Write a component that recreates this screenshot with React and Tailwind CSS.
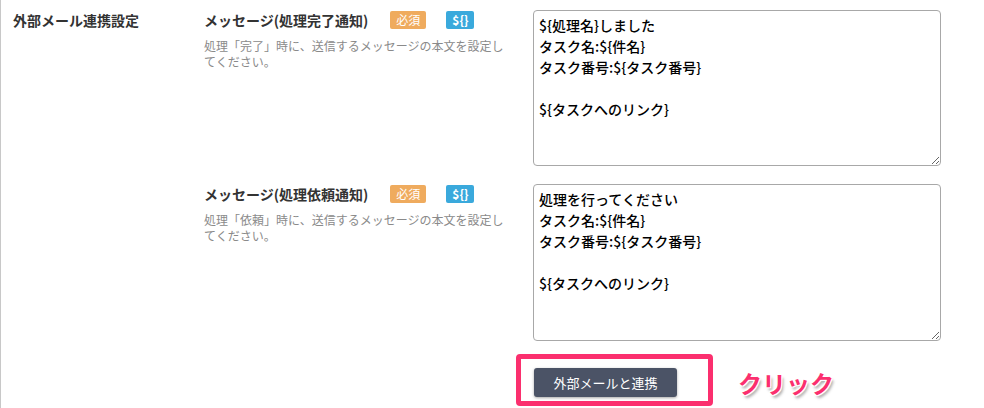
import React from "react";

const font = { fontFamily: '"Noto Sans CJK JP", "Noto Sans", sans-serif' };

const messages = [
  {
    label: "メッセージ(処理完了通知)",
    help: "処理「完了」時に、送信するメッセージの本文を設定してください。",
    value: "${処理名}しました\nタスク名:${件名}\nタスク番号:${タスク番号}\n\n${タスクへのリンク}",
    height: "h-[156px]",
  },
  {
    label: "メッセージ(処理依頼通知)",
    help: "処理「依頼」時に、送信するメッセージの本文を設定してください。",
    value: "処理を行ってください\nタスク名:${件名}\nタスク番号:${タスク番号}\n\n${タスクへのリンク}",
    height: "h-[157px]",
  },
];

const MessageRow = ({ label, help, value, height }) => (
  <div className="flex">
    <div className="w-[329px] shrink-0">
      <div className="flex h-5 items-center">
        <span className="text-[14px] font-bold leading-5 text-[#333]">{label}</span>
        <span className="ml-[22px] flex h-[18px] items-center rounded-[2px] bg-[#efab5e] px-[6px] text-[12px] leading-none text-white">
          必須
        </span>
        <span className="ml-[20px] flex h-[18px] items-center rounded-[2px] bg-[#3aa9dc] px-[6px] text-[12px] font-bold leading-none text-white">
          {"${}"}
        </span>
      </div>
      <p className="mt-2 w-[305px] text-[12px] leading-4 text-[#8a8a8a]">{help}</p>
    </div>
    <textarea
      readOnly
      defaultValue={value}
      className={`${height} w-[408px] shrink-0 rounded-[4px] border border-[#a8a8a8] bg-white px-[5px] py-[4px] text-[14px] font-medium leading-[21px] text-black outline-none`}
      style={font}
    />
  </div>
);

export default function App() {
  return (
    <div className="h-[408px] overflow-hidden bg-white" style={font}>
      <div className="flex h-full border-l border-[#c8c8c8] pt-[10px]">
        <div className="w-[203px] shrink-0 pl-3">
          <h2 className="text-[14px] font-bold leading-5 text-[#333]">外部メール連携設定</h2>
        </div>
        <div className="flex flex-col">
          <div className="flex flex-col gap-[18px]">
            {messages.map((m) => (
              <MessageRow key={m.label} {...m} />
            ))}
          </div>
          <div className="mt-[27px] flex items-center pl-[330px]">
            <div className="relative">
              <div className="pointer-events-none absolute -left-[18px] -top-[14px] h-[52px] w-[197px] rounded-[4px] border-[5px] border-[#fb2f6e]" />
              <button className="h-[29px] w-[143px] rounded-[3px] bg-[#4b5366] text-[13px] text-white shadow-[0_1px_3px_rgba(0,0,0,0.35)]">
                外部メールと連携
              </button>
            </div>
            <span className="ml-[61px] text-[24px] font-bold leading-none text-[#fb2f6e] [text-shadow:1px_1px_0_#fff,-1px_-1px_0_#fff,1px_-1px_0_#fff,-1px_1px_0_#fff,2px_3px_3px_rgba(0,0,0,0.35)]">
              クリック
            </span>
          </div>
        </div>
      </div>
    </div>
  );
}
